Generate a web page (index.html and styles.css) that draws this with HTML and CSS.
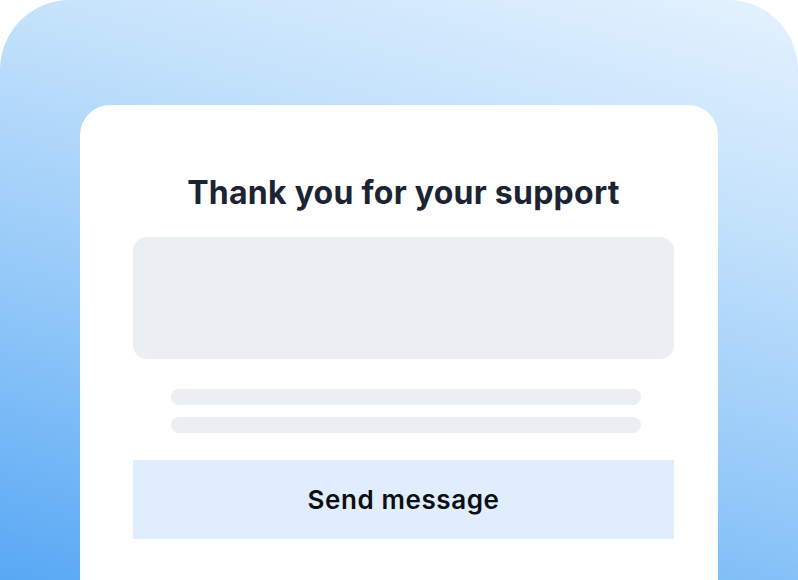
FILE: index.html
```html
<!DOCTYPE html>
<html>
<head>
<meta charset="utf-8">
<link rel="stylesheet" href="styles.css">
</head>
<body>
<div class="frame">
  <div class="card">
    <h1 class="title">Thank you for your support</h1>
    <div class="media"></div>
    <div class="lines">
      <div class="line"></div>
      <div class="line"></div>
    </div>
    <div class="button">Send message</div>
  </div>
</div>
</body>
</html>
```
FILE: styles.css
```css
html, body {
  margin: 0;
  padding: 0;
  background: #ffffff;
}
body {
  width: 798px;
  height: 580px;
  overflow: hidden;
  font-family: Inter, "Noto Sans", sans-serif;
}
.frame {
  box-sizing: border-box;
  width: 798px;
  height: 580px;
  padding: 105px 80px 0 80px;
  border-radius: 70px 70px 0 0;
  background: linear-gradient(196deg, #e4f2fe 0%, #c2e1fb 30%, #90c7f8 65%, #58a8f4 100%);
  display: flex;
}
.card {
  box-sizing: border-box;
  width: 638px;
  background: #ffffff;
  border-radius: 30px 30px 0 0;
  padding: 68px 44px 0 53px;
  display: flex;
  flex-direction: column;
}
.title {
  margin: 0;
  font-size: 32px;
  line-height: 40px;
  font-weight: 700;
  color: #1c2433;
  text-align: center;
  letter-spacing: 0.25px;
}
.media {
  margin-top: 24px;
  height: 122px;
  border-radius: 14px;
  background: #ebeef3;
}
.lines {
  margin: 30px 33px 0 38px;
  display: flex;
  flex-direction: column;
  gap: 12px;
}
.line {
  height: 16px;
  border-radius: 8px;
  background: #ebeef3;
}
.button {
  margin-top: 27px;
  height: 79px;
  background: #dfedfd;
  display: flex;
  align-items: center;
  justify-content: center;
  font-size: 26px;
  font-weight: 600;
  letter-spacing: 0.6px;
  color: #0d0f14;
}
```
